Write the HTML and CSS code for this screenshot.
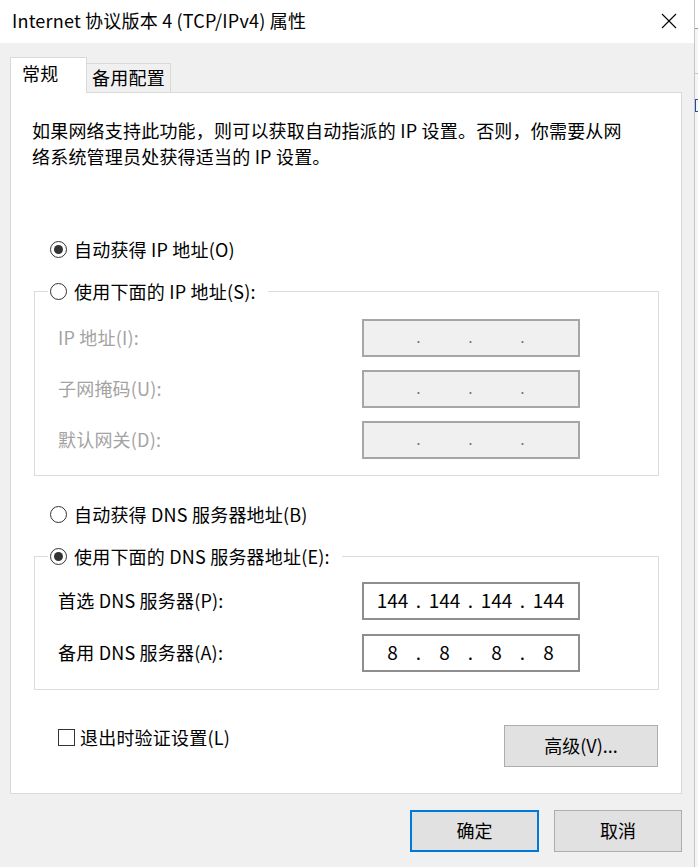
FILE: index.html
```html
<!DOCTYPE html>
<html lang="zh-CN">

<head>
    <meta charset="UTF-8">
    <meta name="viewport" content="width=device-width, initial-scale=1.0">
    <title>Internet 协议版本 4 (TCP/IPv4) 属性</title>
    <link rel="stylesheet" href="styles.css">
</head>

<body>
    <div class="screen">
        <div class="window">
            <header class="titlebar">
                <span class="title">Internet 协议版本 4 (TCP/IPv4) 属性</span>
                <button class="close" aria-label="关闭">
                    <svg width="16" height="16" viewBox="0 0 16 16">
                        <path d="M1 1 L15 15 M15 1 L1 15" stroke="#000" stroke-width="1.1" fill="none" />
                    </svg>
                </button>
            </header>
            <main class="dialog">
                <div class="tabs">
                    <div class="tab active">常规</div>
                    <div class="tab">备用配置</div>
                </div>
                <section class="panel">
                    <p class="desc">如果网络支持此功能，则可以获取自动指派的 IP 设置。否则，你需要从网<br>络系统管理员处获得适当的 IP 设置。</p>

                    <label class="option first">
                        <input class="radio" type="radio" name="ip" checked>
                        <span>自动获得 IP 地址(O)</span>
                    </label>
                    <fieldset class="group group-ip">
                        <legend>
                            <label class="option">
                                <input class="radio" type="radio" name="ip">
                                <span>使用下面的 IP 地址(S):</span>
                            </label>
                        </legend>
                        <div class="field disabled">
                            <span class="field-label">IP 地址(I):</span>
                            <div class="ip-box"><span></span><i>.</i><span></span><i>.</i><span></span><i>.</i><span></span></div>
                        </div>
                        <div class="field disabled">
                            <span class="field-label">子网掩码(U):</span>
                            <div class="ip-box"><span></span><i>.</i><span></span><i>.</i><span></span><i>.</i><span></span></div>
                        </div>
                        <div class="field disabled">
                            <span class="field-label">默认网关(D):</span>
                            <div class="ip-box"><span></span><i>.</i><span></span><i>.</i><span></span><i>.</i><span></span></div>
                        </div>
                    </fieldset>

                    <label class="option dns-auto">
                        <input class="radio" type="radio" name="dns">
                        <span>自动获得 DNS 服务器地址(B)</span>
                    </label>
                    <fieldset class="group group-dns">
                        <legend>
                            <label class="option">
                                <input class="radio" type="radio" name="dns" checked>
                                <span>使用下面的 DNS 服务器地址(E):</span>
                            </label>
                        </legend>
                        <div class="field">
                            <span class="field-label">首选 DNS 服务器(P):</span>
                            <div class="ip-box"><span>144</span><i>.</i><span>144</span><i>.</i><span>144</span><i>.</i><span>144</span></div>
                        </div>
                        <div class="field">
                            <span class="field-label">备用 DNS 服务器(A):</span>
                            <div class="ip-box"><span>8</span><i>.</i><span>8</span><i>.</i><span>8</span><i>.</i><span>8</span></div>
                        </div>
                    </fieldset>

                    <div class="panel-footer">
                        <label class="option check">
                            <input class="checkbox" type="checkbox">
                            <span>退出时验证设置(L)</span>
                        </label>
                        <button class="btn advanced">高级(V)...</button>
                    </div>
                </section>
                <div class="actions">
                    <button class="btn primary">确定</button>
                    <button class="btn">取消</button>
                </div>
            </main>
        </div>
        <div class="backdrop">
            <div class="bd-bar"></div>
            <div class="bd-row"></div>
            <div class="bd-mark"></div>
        </div>
    </div>
</body>

</html>
```

FILE: styles.css
```css
body,
p,
fieldset,
legend {
    margin: 0px;
    padding: 0px;
}

body {
    font-family: "Noto Sans CJK SC", sans-serif;
    font-size: 18px;
    letter-spacing: 0.2px;
    color: #000;
    background: #f3f3f3;
}

.screen {
    display: flex;
    height: 867px;
    overflow: hidden;
}

.window {
    width: 694px;
    flex-shrink: 0;
    border-right: 1px solid #c6c6c6;
    background: #f0f0f0;
}

.titlebar {
    height: 43px;
    background: #fff;
    display: flex;
    align-items: center;
    justify-content: space-between;
    padding: 0px 17px 4px 12px;
    box-sizing: border-box;
}

.title {
    font-size: 18px;
    white-space: nowrap;
}

.close {
    border: none;
    background: none;
    padding: 0px;
    display: flex;
    margin-top: 2px;
}

.dialog {
    padding: 14px 12px 0px 10px;
}

/* tabs */
.tabs {
    display: flex;
    align-items: flex-end;
    height: 35px;
}

.tab {
    box-sizing: border-box;
    height: 29px;
    width: 84px;
    border: 1px solid #d9d9d9;
    border-left: none;
    border-bottom: none;
    background: #f0f0f0;
    display: flex;
    align-items: center;
    justify-content: center;
    font-size: 18px;
    padding-bottom: 3px;
}

.tab.active {
    position: relative;
    z-index: 1;
    height: 36px;
    width: 77px;
    margin-bottom: -1px;
    border-left: 1px solid #d9d9d9;
    background: #fff;
    justify-content: flex-start;
    padding: 0px 0px 5px 11px;
}

/* panel */
.panel {
    box-sizing: border-box;
    width: 672px;
    height: 702px;
    background: #fff;
    border: 1px solid #d9d9d9;
    padding: 0px 22px 0px 23px;
}

.desc {
    margin: 24px 0px 0px -2px;
    line-height: 26px;
    white-space: nowrap;
}

.option {
    display: flex;
    align-items: center;
    height: 26px;
    gap: 7px;
    white-space: nowrap;
}

.option.first {
    margin: 67px 0px 0px 16px;
}

.option.dns-auto {
    margin: 25px 0px 0px 16px;
}

.radio,
.checkbox {
    appearance: none;
    margin: 0px;
    width: 17px;
    height: 17px;
    border: 1px solid #333;
    background: #fff;
    box-sizing: border-box;
    flex-shrink: 0;
}

.radio {
    border-radius: 50%;
    display: grid;
    place-items: center;
}

.radio:checked::after {
    content: "";
    width: 9px;
    height: 9px;
    border-radius: 50%;
    background: #333;
}

.checkbox {
    border-color: #333;
}

/* group boxes */
.group {
    border: 1px solid #dcdcdc;
    margin-top: 16px;
    min-width: 0px;
    padding: 15px 0px 16px 23px;
}

.group legend {
    margin-left: -10px;
    padding: 0px 12px 0px 2px;
}

.group-dns {
    padding-top: 13px;
    padding-bottom: 17px;
}

.field {
    display: grid;
    grid-template-columns: 304px 218px;
    align-items: center;
}

.field+.field {
    margin-top: 13px;
}

.group-dns .field+.field {
    margin-top: 14px;
}

.field-label {
    white-space: nowrap;
    padding-bottom: 2px;
}

.field.disabled .field-label {
    color: #a3a3a3;
}

.ip-box {
    box-sizing: border-box;
    height: 38px;
    border: 2px solid #8e8e8e;
    background: #fff;
    display: grid;
    grid-template-columns: 45px 7px 45px 7px 45px 7px 45px;
    align-items: center;
    padding: 0px 0px 3px 6px;
    font-size: 19px;
    letter-spacing: 0px;
}

.ip-box span,
.ip-box i {
    text-align: center;
    font-style: normal;
}

.field.disabled .ip-box {
    background: #f0f0f0;
    border-color: #a6a6a6;
}

.field.disabled .ip-box i {
    color: #6d6d6d;
    font-size: 14px;
}

/* footer of the panel */
.panel-footer {
    margin-top: 35px;
    display: flex;
    justify-content: space-between;
    align-items: flex-start;
    padding-left: 24px;
}

.option.check {
    gap: 5px;
    margin-top: -1px;
}

.btn {
    font-family: inherit;
    font-size: 18px;
    color: #000;
    background: #e1e1e1;
    border: 1px solid #adadad;
    box-sizing: border-box;
    height: 42px;
    padding: 0px 0px 2px;
}

.btn.advanced {
    width: 154px;
    height: 42px;
    margin-right: 1px;
}

.actions {
    display: flex;
    justify-content: flex-end;
    gap: 15px;
    margin-top: 16px;
}

.actions .btn {
    width: 128px;
}

.actions .btn.primary {
    width: 129px;
    border: 2px solid #0078d7;
}

/* window behind */
.backdrop {
    flex: 1;
    overflow: hidden;
    background: #f5f5f5;
}

.bd-bar {
    height: 28px;
    border-bottom: 1px solid #9a9a9a;
    background: #fff;
}

.bd-row {
    height: 44px;
    border-bottom: 1px solid #c8c8c8;
}

.bd-mark {
    width: 3px;
    height: 13px;
    margin-top: 25px;
    border-left: 1px solid #1f4e9a;
    border-top: 1px solid #1f4e9a;
    border-bottom: 1px solid #1f4e9a;
    box-sizing: border-box;
}
```
